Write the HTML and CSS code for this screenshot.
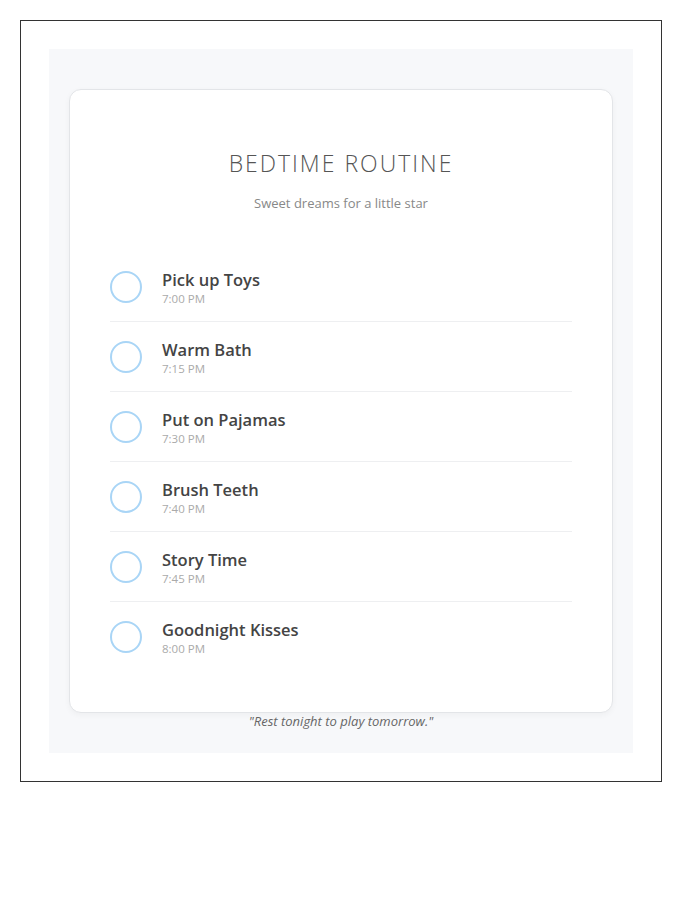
FILE: index.html
```html
<!DOCTYPE html>
<html lang="en">
<head>
<meta charset="utf-8">
<title>Bedtime Routine</title>
<link rel="stylesheet" href="styles.css">
</head>
<body>
<div class="frame">
  <main class="page">
    <section class="card">
      <header class="card-header">
        <h1 class="title">Bedtime Routine</h1>
        <p class="subtitle">Sweet dreams for a little star</p>
      </header>
      <ul class="tasks">
        <li class="task"><span class="check"></span><div class="task-text"><span class="task-name">Pick up Toys</span><span class="task-time">7:00 PM</span></div></li>
        <li class="task"><span class="check"></span><div class="task-text"><span class="task-name">Warm Bath</span><span class="task-time">7:15 PM</span></div></li>
        <li class="task"><span class="check"></span><div class="task-text"><span class="task-name">Put on Pajamas</span><span class="task-time">7:30 PM</span></div></li>
        <li class="task"><span class="check"></span><div class="task-text"><span class="task-name">Brush Teeth</span><span class="task-time">7:40 PM</span></div></li>
        <li class="task"><span class="check"></span><div class="task-text"><span class="task-name">Story Time</span><span class="task-time">7:45 PM</span></div></li>
        <li class="task"><span class="check"></span><div class="task-text"><span class="task-name">Goodnight Kisses</span><span class="task-time">8:00 PM</span></div></li>
      </ul>
    </section>
    <p class="quote">"Rest tonight to play tomorrow."</p>
  </main>
</div>
</body>
</html>
```
FILE: styles.css
```css
* { box-sizing: border-box; }

body {
  margin: 20px;
  font-family: "Open Sans", "Noto Sans", sans-serif;
  background: #fff;
}

.frame {
  width: 642px;
  border: 1px solid #333;
  padding: 28px;
}

.page {
  background: #f7f8fa;
  padding: 40px 20px 23px;
}

.card {
  background: #fff;
  border: 1px solid #e3e5e8;
  border-radius: 12px;
  padding: 40px;
  box-shadow: 0 2px 6px rgba(0, 0, 0, 0.04);
}

.card-header {
  text-align: center;
  padding-top: 16px;
  margin-bottom: 39px;
}

.title {
  margin: 0;
  font-size: 23px;
  line-height: 34px;
  font-weight: 300;
  letter-spacing: 2px;
  text-transform: uppercase;
  color: #555;
}

.subtitle {
  margin: 13px 0 0;
  font-size: 13px;
  line-height: 20px;
  color: #888;
}

.tasks {
  list-style: none;
  margin: 0;
  padding: 0;
}

.task {
  display: flex;
  align-items: center;
  gap: 20px;
  height: 70px;
  padding-top: 2px;
  border-bottom: 1px solid #eeeff1;
}

.task:last-child { border-bottom: none; }

.check {
  flex: none;
  width: 32px;
  height: 32px;
  margin-top: -2px;
  border: 2px solid #a9d5f6;
  border-radius: 50%;
}

.task-text {
  display: flex;
  flex-direction: column;
}

.task-name {
  font-size: 16.5px;
  line-height: 22px;
  font-weight: 600;
  color: #444;
}

.task-time {
  font-size: 11.5px;
  line-height: 16px;
  color: #aaa;
}

.quote {
  margin: -1px 0 0;
  text-align: center;
  font-size: 13px;
  line-height: 18px;
  font-style: italic;
  color: #666;
}
```
